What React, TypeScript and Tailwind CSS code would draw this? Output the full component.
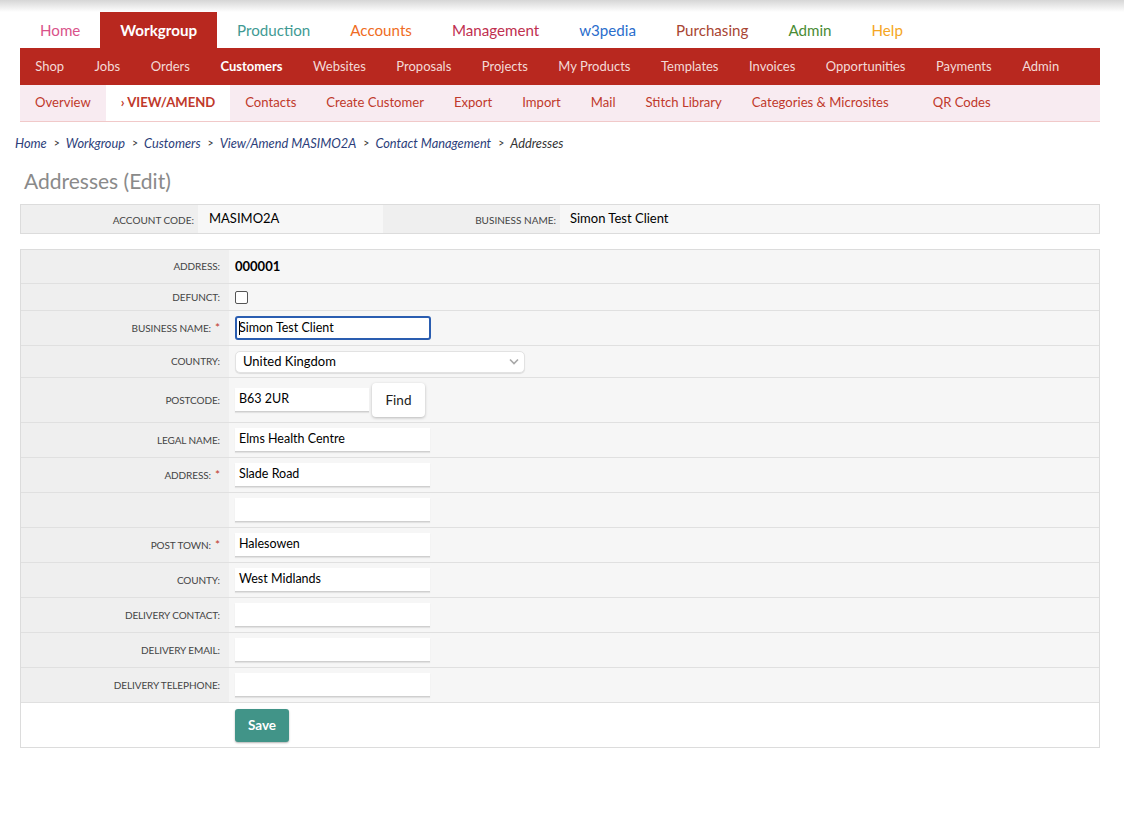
import React from 'react';

const topTabs: { label: string; color: string; active?: boolean }[] = [
  { label: 'Home', color: 'text-[#d9528a]' },
  { label: 'Workgroup', color: 'text-white', active: true },
  { label: 'Production', color: 'text-[#3f9a93]' },
  { label: 'Accounts', color: 'text-[#ef6c23]' },
  { label: 'Management', color: 'text-[#c0304f]' },
  { label: 'w3pedia', color: 'text-[#2a6dcc]' },
  { label: 'Purchasing', color: 'text-[#a84532]' },
  { label: 'Admin', color: 'text-[#4a8c35]' },
  { label: 'Help', color: 'text-[#f5a623]' },
];

const redItems = ['Shop', 'Jobs', 'Orders', 'Customers', 'Websites', 'Proposals', 'Projects', 'My Products', 'Templates', 'Invoices', 'Opportunities', 'Payments', 'Admin'];

const subItems = ['Overview', 'VIEW/AMEND', 'Contacts', 'Create Customer', 'Export', 'Import', 'Mail', 'Stitch Library', 'Categories & Microsites', 'QR Codes'];

const crumbs = ['Home', 'Workgroup', 'Customers', 'View/Amend MASIMO2A', 'Contact Management'];

const Label = ({ text, required }: { text: string; required?: boolean }) => (
  <div className="w-[208px] shrink-0 bg-[#efefef] flex items-center justify-end pr-[9px] text-[10px] uppercase text-[#444] tracking-[-0.1px]">
    {text}
    {required && <span className="text-[#c0392b] ml-[4px] text-[12px] leading-none">*</span>}
  </div>
);

const TextInput = ({ value, width = 'w-[195px]' }: { value: string; width?: string }) => (
  <div className={`${width} h-[24px] bg-white border-b border-[#cfcfcf] shadow-[0_1px_1px_rgba(0,0,0,0.08)] flex items-center px-[4px] text-[12.5px] text-black`}>
    {value}
  </div>
);

const Row = ({ label, required, h, children }: { label: string; required?: boolean; h: string; children?: React.ReactNode }) => (
  <div className={`flex ${h} border-b border-[#e0e0e0]`}>
    <Label text={label} required={required} />
    <div className="flex-1 bg-[#f6f6f6] flex items-center pl-[6px]">{children}</div>
  </div>
);

export default function App() {
  return (
    <div className="min-h-[818px] bg-white font-['Lato','Noto_Sans',sans-serif] text-[#333]">
      <div className="h-[12px] bg-linear-to-b from-[#d6d6d6] to-white" />

      {/* Top tabs */}
      <div className="flex h-[36px] px-[20px]">
        {topTabs.map((t) => (
          <div
            key={t.label}
            className={`px-[20px] flex items-center text-[15.15px] ${t.color} ${t.active ? 'bg-[#b8281f] font-bold' : ''}`}
          >
            {t.label}
          </div>
        ))}
      </div>

      {/* Red bar */}
      <div className="ml-[20px] mr-[24px] h-[37px] bg-[#b8281f] flex items-center">
        {redItems.map((r) => (
          <div
            key={r}
            className={`px-[15.25px] text-[13px] ${r === 'Customers' ? 'text-white font-bold' : 'text-[#f3dad7]'}`}
          >
            {r}
          </div>
        ))}
      </div>

      {/* Sub bar */}
      <div className="ml-[20px] mr-[24px] h-[37px] bg-[#f8ebf1] border-b border-[#f1c9c9] flex">
        {subItems.map((s) => (
          <div
            key={s}
            className={`px-[15px] flex items-center text-[13.1px] text-[#c0392b] ${s === 'VIEW/AMEND' ? 'bg-white font-bold' : ''} ${s === 'QR Codes' ? 'ml-[14px]' : ''}`}
          >
            {s === 'VIEW/AMEND' ? '› VIEW/AMEND' : s}
          </div>
        ))}
      </div>

      {/* Breadcrumb */}
      <div className="mt-[14px] px-[15px] text-[12.8px] flex items-center h-[16px]">
        {crumbs.map((c) => (
          <React.Fragment key={c}>
            <span className="italic text-[#2c3e7a]">{c}</span>
            <span className="ml-[7px] mr-[6px] text-[#333] text-[10.5px]">&gt;</span>
          </React.Fragment>
        ))}
        <span className="italic text-[#333]">Addresses</span>
      </div>

      {/* Heading */}
      <h1 className="mt-[16px] ml-[24px] text-[21px] text-[#8a8a8a] leading-[26px]">Addresses (Edit)</h1>

      {/* Account strip */}
      <div className="mt-[10px] ml-[20px] mr-[24px] h-[30px] border border-[#dcdcdc] flex">
        <div className="w-[177px] bg-[#efefef] flex items-center justify-end pr-[4px] pt-[2px] text-[10px] uppercase text-[#444]">Account Code:</div>
        <div className="w-[185px] bg-[#f7f7f7] flex items-center pl-[11px] pb-[1px] text-[13px] text-black">MASIMO2A</div>
        <div className="w-[177px] bg-[#efefef] flex items-center justify-end pr-[4px] pt-[2px] text-[10px] uppercase text-[#444]">Business Name:</div>
        <div className="flex-1 bg-[#f7f7f7] flex items-center pl-[10px] pb-[1px] text-[13px] text-black">Simon Test Client</div>
      </div>

      {/* Main form */}
      <div className="mt-[15px] ml-[20px] mr-[24px] border border-[#dcdcdc]">
        <Row label="Address:" h="h-[34px]">
          <span className="font-bold text-[13px] text-black">000001</span>
        </Row>
        <Row label="Defunct:" h="h-[27px]">
          <span className="w-[13px] h-[13px] border border-[#555] rounded-[2px] bg-white" />
        </Row>
        <Row label="Business Name:" required h="h-[35px]">
          <div className="w-[196px] h-[24px] bg-white border-2 border-[#2a5db0] rounded-[3px] flex items-center px-[2px] text-[12.5px] text-black">
            <span className="w-px h-[14px] bg-black" />
            <span className="-ml-[1px]">Simon Test Client</span>
          </div>
        </Row>
        <Row label="Country:" h="h-[32px]">
          <div className="w-[290px] h-[22px] bg-white border border-[#e2e2e2] rounded-[5px] shadow-[0_1px_1px_rgba(0,0,0,0.1)] flex items-center justify-between pl-[7px] pr-[5px] text-[13px] text-black">
            United Kingdom
            <svg width="10" height="7" viewBox="0 0 10 7" fill="none">
              <path d="M1 1.5 5 5.5 9 1.5" stroke="#a8a8a8" strokeWidth="1.6" />
            </svg>
          </div>
        </Row>
        <Row label="Postcode:" h="h-[45px]">
          <TextInput value="B63 2UR" width="w-[134px]" />
          <div className="ml-[3px] w-[53px] h-[34px] bg-white rounded-[4px] shadow-[0_1px_3px_rgba(0,0,0,0.25)] flex items-center justify-center text-[13.5px] text-[#222]">
            Find
          </div>
        </Row>
        <Row label="Legal Name:" h="h-[35px]">
          <TextInput value="Elms Health Centre" />
        </Row>
        <Row label="Address:" required h="h-[35px]">
          <TextInput value="Slade Road" />
        </Row>
        <Row label="" h="h-[35px]">
          <TextInput value="" />
        </Row>
        <Row label="Post Town:" required h="h-[35px]">
          <TextInput value="Halesowen" />
        </Row>
        <Row label="County:" h="h-[35px]">
          <TextInput value="West Midlands" />
        </Row>
        <Row label="Delivery Contact:" h="h-[35px]">
          <TextInput value="" />
        </Row>
        <Row label="Delivery Email:" h="h-[35px]">
          <TextInput value="" />
        </Row>
        <Row label="Delivery Telephone:" h="h-[35px]">
          <TextInput value="" />
        </Row>
        <div className="h-[44px] bg-white flex items-center pl-[214px]">
          <div className="w-[54px] h-[33px] bg-[#419488] rounded-[3px] shadow-[0_1px_2px_rgba(0,0,0,0.3)] flex items-center justify-center text-white font-bold text-[13.5px]">
            Save
          </div>
        </div>
      </div>
    </div>
  );
}
